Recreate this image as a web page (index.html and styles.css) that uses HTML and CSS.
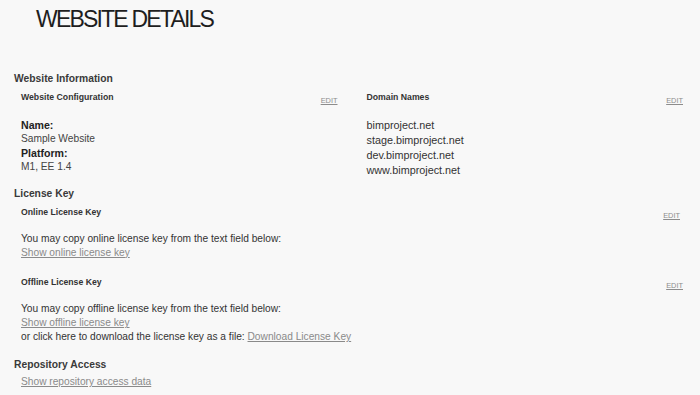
FILE: index.html
```html
<!DOCTYPE html>
<html lang="en">
<head>
<meta charset="utf-8">
<title>Website Details</title>
<link rel="stylesheet" href="styles.css">
</head>
<body>
<div class="page">
  <h1 class="title">WEBSITE DETAILS</h1>

  <section class="section section-info">
    <h2 class="section-title">Website Information</h2>
    <div class="info-grid">
      <div class="panel">
        <div class="panel-head">
          <h3 class="panel-title">Website Configuration</h3>
          <a class="edit" href="#">EDIT</a>
        </div>
        <div class="config">
          <div class="label">Name:</div>
          <div class="value">Sample Website</div>
          <div class="label">Platform:</div>
          <div class="value">M1, EE 1.4</div>
        </div>
      </div>
      <div class="panel">
        <div class="panel-head">
          <h3 class="panel-title">Domain Names</h3>
          <a class="edit" href="#">EDIT</a>
        </div>
        <ul class="domains">
          <li>bimproject.net</li>
          <li>stage.bimproject.net</li>
          <li>dev.bimproject.net</li>
          <li>www.bimproject.net</li>
        </ul>
      </div>
    </div>
  </section>

  <section class="section section-license">
    <h2 class="section-title">License Key</h2>
    <div class="panel">
      <div class="panel-head panel-head-online">
        <h3 class="panel-title">Online License Key</h3>
        <a class="edit" href="#">EDIT</a>
      </div>
      <div class="text-block">
        <p>You may copy online license key from the text field below:</p>
        <p><a class="link" href="#">Show online license key</a></p>
      </div>
    </div>
    <div class="panel panel-offline">
      <div class="panel-head">
        <h3 class="panel-title">Offline License Key</h3>
        <a class="edit" href="#">EDIT</a>
      </div>
      <div class="text-block">
        <p>You may copy offline license key from the text field below:</p>
        <p><a class="link" href="#">Show offline license key</a></p>
        <p>or click here to download the license key as a file: <a class="link" href="#">Download License Key</a></p>
      </div>
    </div>
  </section>

  <section class="section section-repo">
    <h2 class="section-title">Repository Access</h2>
    <div class="panel">
      <p class="repo-link"><a class="link" href="#">Show repository access data</a></p>
    </div>
  </section>
</div>
</body>
</html>
```

FILE: styles.css
```css
html, body {
  margin: 0;
  padding: 0;
  background: #f8f8f8;
}

body {
  font-family: "Liberation Sans", Arial, sans-serif;
  color: #444;
}

.page {
  padding: 0 10px 0 14px;
}

.title {
  margin: 0;
  padding: 5px 0 0 22px;
  font-size: 23px;
  line-height: 28px;
  font-weight: normal;
  letter-spacing: -1.8px;
  color: #1e1e1e;
}

.section-title {
  margin: 0;
  font-size: 10.3px;
  line-height: 14px;
  font-weight: bold;
  color: #3a3a3a;
}

.section-info {
  margin-top: 39.4px;
}

.section-license {
  margin-top: 9.6px;
}

.section-repo {
  margin-top: 13.5px;
}

.info-grid {
  display: grid;
  grid-template-columns: 1fr 1fr;
  column-gap: 15px;
  align-items: start;
}

.panel {
  padding: 0 7px;
}

.panel-head {
  display: flex;
  justify-content: space-between;
  align-items: flex-start;
  margin-top: 4.4px;
}

.panel-head-online {
  padding-right: 3px;
}

.panel-title {
  margin: 0;
  font-size: 8.7px;
  line-height: 12px;
  font-weight: bold;
  color: #333;
}

.edit {
  padding-top: 5px;
  font-size: 7.4px;
  line-height: 10px;
  color: #8c8c8c;
  text-decoration: underline;
}

.config {
  margin-top: 12.6px;
}

.label {
  font-size: 10.6px;
  line-height: 14px;
  font-weight: bold;
  color: #222;
}

.value {
  font-size: 10.2px;
  line-height: 14px;
  color: #444;
}

.domains {
  list-style: none;
  margin: 12.1px 0 0;
  padding: 0;
  font-size: 10.8px;
  line-height: 15px;
  color: #333;
}

.text-block {
  margin-top: 10.8px;
}

.text-block p,
.repo-link {
  margin: 0;
  font-size: 10.2px;
  line-height: 14px;
  color: #333;
}

.panel-offline .panel-head {
  margin-top: 16.5px;
}

.panel-offline .text-block {
  margin-top: 11.2px;
}

.repo-link {
  margin-top: 3.1px;
}

.link {
  color: #8a8a8a;
  text-decoration: underline;
}
```
